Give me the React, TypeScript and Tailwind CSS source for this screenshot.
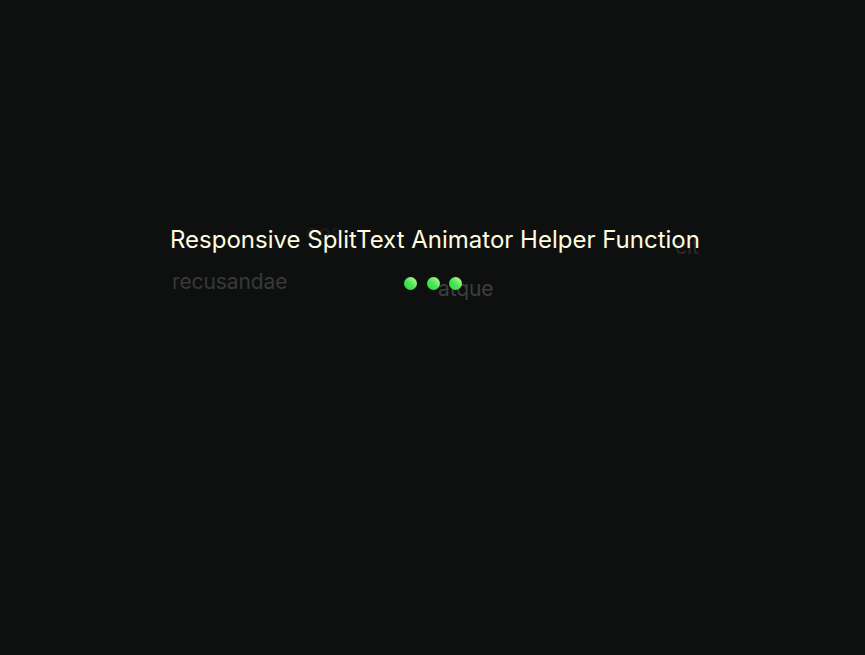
import React from 'react';

const words = [
    { text: 'recusandae', x: 2, y: 45, color: 'text-[#383938]' },
    { text: 'atque', x: 268, y: 52, color: 'text-[#3d3e3d]' },
    { text: 'eos', x: 136, y: -4, color: 'text-[#1a1c1b]' },
    { text: 'cit', x: 505, y: 10, color: 'text-[#2a2b2a]' },
];

const App = () => {
    return (
        <div
            className="min-h-screen w-full bg-[#0e100f] pt-[226px] pl-[170px]"
            style={{ fontFamily: 'Inter, "Liberation Sans", sans-serif' }}
        >
            <div className="relative w-[530px] h-[90px]">
                {/* drifting words behind the heading */}
                {words.map((w) => (
                    <span
                        key={w.text}
                        className={`absolute text-[21px] ${w.color} leading-none tracking-[-0.1px]`}
                        style={{ left: w.x, top: w.y }}
                    >
                        {w.text}
                    </span>
                ))}

                <h1 className="relative text-[24px] leading-[28px] text-[#fffce1]">
                    Responsive SplitText Animator Helper Function
                </h1>

                {/* loading dots */}
                <div className="absolute left-[234px] top-[51px] flex gap-[9.5px]">
                    <span className="block w-[13px] h-[13px] rounded-full bg-gradient-to-tr from-[#16d83a] via-[#4ee65a] to-[#c4f7a0]" />
                    <span className="block w-[13px] h-[13px] rounded-full bg-gradient-to-tr from-[#16d83a] via-[#4ee65a] to-[#c4f7a0]" />
                    <span className="block w-[13px] h-[13px] rounded-full bg-gradient-to-tr from-[#16d83a] via-[#4ee65a] to-[#c4f7a0]" />
                </div>
            </div>
        </div>
    );
};

export default App;
